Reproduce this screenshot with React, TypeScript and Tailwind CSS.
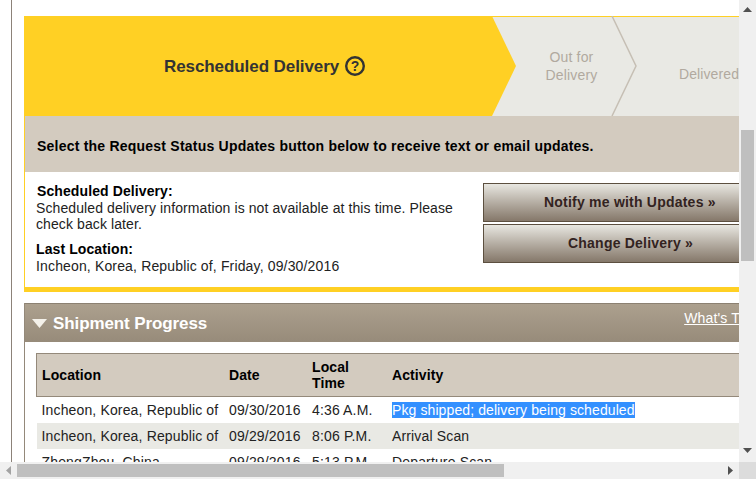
const rows = [
  { location: "Incheon, Korea, Republic of", date: "09/30/2016", time: "4:36 A.M.", activity: "Pkg shipped; delivery being scheduled", selected: true },
  { location: "Incheon, Korea, Republic of", date: "09/29/2016", time: "8:06 P.M.", activity: "Arrival Scan", shaded: true },
  { location: "ZhengZhou, China", date: "09/29/2016", time: "5:13 P.M.", activity: "Departure Scan" },
];

const ProgressSteps = () => (
  <div className="relative flex h-[100px] w-[715px] bg-[#e9e9e4]">
    <svg className="absolute left-0 top-0" width="715" height="100" viewBox="0 0 715 100">
      <polygon points="0,0 468,0 492,50 468,100 0,100" fill="#ffd024" />
      <rect x="468" y="0" width="247" height="1" fill="#ffd024" />
      <polyline points="588,0 612,50 588,100" fill="none" stroke="#c6bfb4" strokeWidth="1.5" />
    </svg>
    <div className="relative flex w-[492px] shrink-0 items-center pl-[140px] text-[17px] font-bold tracking-[-0.08px] text-[#333333]">
      <span className="pt-[2px]">Rescheduled Delivery</span>
      <svg className="ml-[6px]" width="20" height="20" viewBox="0 0 20 20">
        <circle cx="10" cy="10" r="8.8" fill="none" stroke="#333333" strokeWidth="2.4" />
        <text x="10" y="14.8" textAnchor="middle" fontSize="14" fontWeight="bold" fill="#333333">?</text>
      </svg>
    </div>
    <div className="relative flex w-[110px] shrink-0 items-center justify-center pb-[1px] pl-[1px] text-center text-[14px] leading-[18px] text-[#b1a99f]">
      Out for
      <br />
      Delivery
    </div>
    <div className="relative pl-[53px] pt-[49px] text-[14px] leading-[18px] tracking-[0.1px] text-[#b1a99f]">Delivered</div>
  </div>
);

const ActionButton = ({ label, className }: { label: string; className: string }) => (
  <button className={`flex h-[39px] w-[300px] items-center justify-start border border-[#5c4f3f] bg-gradient-to-b from-[#e8e7e1] to-[#85786a] text-[14px] font-bold tracking-[0.22px] text-[#33231f] ${className}`}>
    {label}
  </button>
);

export default function App() {
  return (
    <div className="flex h-[479px] w-[756px] flex-col overflow-hidden bg-white font-['Liberation_Sans',Arial,sans-serif] text-[14px] tracking-[0.15px] text-[#222222]">
      <div className="flex h-[462px] min-h-0">
        {/* Page */}
        <div className="h-full w-[739px] overflow-hidden">
          <div className="ml-[11px] h-full w-[900px] border-l border-[#8c8279] pl-[12px] pt-[16px]">
            {/* Status card */}
            <div className="w-[800px]">
              <ProgressSteps />
              <div className="border-b-[5px] border-l border-[#ffd024]">
                <div className="flex h-[56px] items-center bg-[#d3cbbf] pl-[12px] pt-[4px] text-[14px] font-bold tracking-[0.22px] text-black">
                  Select the Request Status Updates button below to receive text or email updates.
                </div>
                <div className="flex h-[115px]">
                  <div className="w-[458px] shrink-0 pl-[11px] pt-[11px] leading-[16px]">
                    <div className="pl-[1px] font-bold tracking-[0.1px] text-black">Scheduled Delivery:</div>
                    <div className="pt-[1px] tracking-[0.1px]">Scheduled delivery information is not available at this time. Please check back later.</div>
                    <div className="mt-[9px] font-bold tracking-[0.1px] text-black">Last Location:</div>
                    <div className="pt-[1px]">Incheon, Korea, Republic of, Friday, 09/30/2016</div>
                  </div>
                  <div className="flex flex-col gap-[2px] pt-[11px]">
                    <ActionButton label="Notify me with Updates »" className="pl-[60px]" />
                    <ActionButton label="Change Delivery »" className="pl-[84px]" />
                  </div>
                </div>
              </div>
            </div>

            {/* Shipment progress */}
            <div className="mt-[11px] w-[800px] border-l border-[#94897a]">
              <div className="flex h-[39px] w-full items-start border-t border-[#8c8172] bg-gradient-to-b from-[#aca08e] to-[#978b7a] text-white">
                <svg className="ml-[7px] mt-[15px]" width="15" height="9" viewBox="0 0 15 9">
                  <polygon points="0,0 15,0 7.5,9" fill="#f4f1ea" />
                </svg>
                <span className="ml-[6px] mt-[11px] text-[17px] font-bold leading-[18px] tracking-[-0.1px]">Shipment Progress</span>
                <a className="ml-[477px] mt-[6px] text-[14px] leading-[16px] underline">What's This?</a>
              </div>
              <div className="pl-[11px] pt-[11px]">
                <table className="w-[780px] table-fixed border-collapse text-left text-[14px]">
                  <thead>
                    <tr className="h-[43px] border-y border-[#94897a] bg-[#d3cbbf] font-bold leading-[16px] tracking-[0.1px] text-black">
                      <th className="w-[187.5px] border-l border-[#94897a] pl-[5px] font-bold">Location</th>
                      <th className="w-[83px] pl-[5px] font-bold">Date</th>
                      <th className="w-[80px] pl-[5px] font-bold">
                        Local
                        <br />
                        Time
                      </th>
                      <th className="pl-[5px] font-bold">Activity</th>
                    </tr>
                  </thead>
                  <tbody>
                    {rows.map((row) => (
                      <tr key={row.date + row.time} className={row.shaded ? "h-[26px] bg-[#e9e9e4]" : "h-[26px]"}>
                        <td className="whitespace-nowrap pl-[5px] pt-[1px]">{row.location}</td>
                        <td className="pl-[5px] pt-[1px]">{row.date}</td>
                        <td className="pl-[5px] pt-[1px]">{row.time}</td>
                        <td className="pl-[5px] pt-[1px]">
                          {row.selected ? <span className="bg-[#3390ff] tracking-[0.1px] text-white">{row.activity}</span> : row.activity}
                        </td>
                      </tr>
                    ))}
                  </tbody>
                </table>
              </div>
            </div>
          </div>
        </div>

        {/* Vertical scrollbar */}
        <div className="flex h-full w-[17px] flex-col items-center bg-[#f0f0f0]">
          <svg className="mt-[7px]" width="9" height="5" viewBox="0 0 9 5">
            <polygon points="0,5 4.5,0 9,5" fill="#505050" />
          </svg>
          <div className="mt-[118px] h-[131px] w-[13px] bg-[#bfbfbf]" />
          <svg className="mt-[187px]" width="9" height="5" viewBox="0 0 9 5">
            <polygon points="0,0 9,0 4.5,5" fill="#505050" />
          </svg>
        </div>
      </div>

      {/* Horizontal scrollbar */}
      <div className="flex h-[17px] items-center bg-[#f0f0f0]">
        <svg className="ml-[6px]" width="5" height="9" viewBox="0 0 5 9">
          <polygon points="5,0 5,9 0,4.5" fill="#a3a3a3" />
        </svg>
        <div className="ml-[6px] h-[13px] w-[488px] bg-[#bfbfbf]" />
        <svg className="ml-[224px]" width="5" height="9" viewBox="0 0 5 9">
          <polygon points="0,0 5,4.5 0,9" fill="#505050" />
        </svg>
        <div className="ml-[6px] h-full w-[17px] bg-[#dcdcdc]" />
      </div>
    </div>
  );
}
